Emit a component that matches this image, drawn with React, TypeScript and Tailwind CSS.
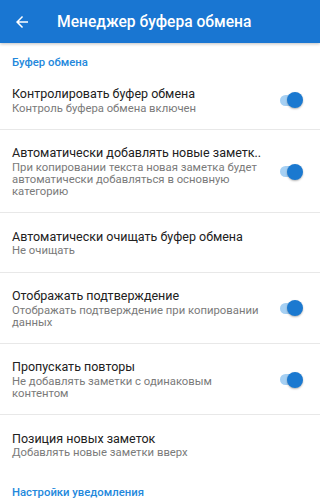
import React from "react";

type Item = { title: string; subtitle: string[]; toggle?: boolean; last?: boolean };

const items: Item[] = [
  { title: "Контролировать буфер обмена", subtitle: ["Контроль буфера обмена включен"], toggle: true },
  {
    title: "Автоматически добавлять новые заметк..",
    subtitle: [
      "При копировании текста новая заметка будет",
      "автоматически добавляться в основную",
      "категорию",
    ],
    toggle: true,
  },
  { title: "Автоматически очищать буфер обмена", subtitle: ["Не очищать"] },
  {
    title: "Отображать подтверждение",
    subtitle: ["Отображать подтверждение при копировании", "данных"],
    toggle: true,
  },
  {
    title: "Пропускать повторы",
    subtitle: ["Не добавлять заметки с одинаковым", "контентом"],
    toggle: true,
  },
  { title: "Позиция новых заметок", subtitle: ["Добавлять новые заметки вверх"], last: true },
];

function Toggle() {
  return (
    <div className="relative w-[24px] h-[16px] shrink-0">
      <div className="absolute left-[1px] top-[2.5px] w-[22px] h-[11px] rounded-full bg-[#a6d0f3]" />
      <div className="absolute left-[8px] top-0 w-[16px] h-[16px] rounded-full bg-[#1b79d0] shadow-[0_1px_2px_rgba(0,0,0,0.3)]" />
    </div>
  );
}

function Header({ text }: { text: string }) {
  return (
    <div className="pl-[12px] pt-[14px] pb-[1.7px] text-[11.3px] leading-[12px] font-medium text-[#2388dc]">
      {text}
    </div>
  );
}

export default function App() {
  return (
    <div
      className="w-[320px] h-[504px] overflow-hidden bg-white"
      style={{ fontFamily: "Roboto, 'Noto Sans', sans-serif" }}
    >
      <div className="relative z-10 h-[43px] bg-[#1976d2] flex items-center shadow-[0_1px_3px_rgba(0,0,0,0.25)]">
        <svg width="18" height="18" viewBox="0 0 24 24" className="ml-[13px] mt-[1px]" fill="#ffffff">
          <path d="M20 11H7.83l5.59-5.59L12 4l-8 8 8 8 1.41-1.41L7.83 13H20v-2z" />
        </svg>
        <div className="ml-[26px] text-[15.6px] leading-[20px] font-medium text-white">
          Менеджер буфера обмена
        </div>
      </div>
      <Header text="Буфер обмена" />
      {items.map((it, i) => (
        <div
          key={i}
          className={
            "flex items-center pl-[12px] pr-[17px] pt-[15.5px] pb-[14.3px] " +
            (it.last ? "" : "border-b border-[#e8e8e8]")
          }
        >
          <div className="flex-1 min-w-0">
            <div className="text-[12.5px] leading-[15px] text-[#212121] whitespace-nowrap">{it.title}</div>
            <div className="mt-[1.5px] text-[11.3px] leading-[12px] text-[#7a7a7a]">
              {it.subtitle.map((s, j) => (
                <div key={j} className="whitespace-nowrap">
                  {s}
                </div>
              ))}
            </div>
          </div>
          {it.toggle && <Toggle />}
        </div>
      ))}
      <Header text="Настройки уведомления" />
    </div>
  );
}
